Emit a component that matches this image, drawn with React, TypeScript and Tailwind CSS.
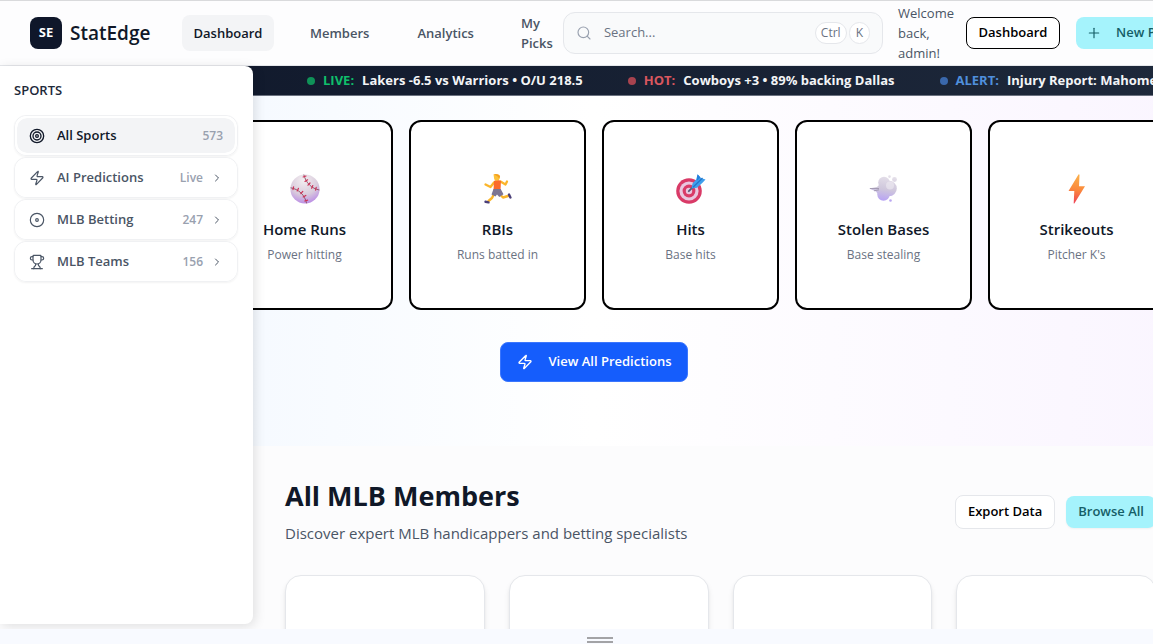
import React from 'react'
import { ChevronRight, Disc, Plus, Search, Target, Trophy, Zap, type LucideIcon } from 'lucide-react'

const tickerItems = [
  { label: 'LIVE:', text: 'Lakers -6.5 vs Warriors • O/U 218.5', dot: 'bg-[#0f9258]', color: 'text-[#0fbf6b]' },
  { label: 'HOT:', text: 'Cowboys +3 • 89% backing Dallas', dot: 'bg-[#a8434f]', color: 'text-[#d9575f]' },
  { label: 'ALERT:', text: 'Injury Report: Mahomes', dot: 'bg-[#3a68ac]', color: 'text-[#4f8fdc]' },
]

type SportItem = { name: string; count: string; icon: LucideIcon; active?: boolean }

const sports: SportItem[] = [
  { name: 'All Sports', count: '573', icon: Target, active: true },
  { name: 'AI Predictions', count: 'Live', icon: Zap },
  { name: 'MLB Betting', count: '247', icon: Disc },
  { name: 'MLB Teams', count: '156', icon: Trophy },
]

const BaseballArt = () => (
  <svg viewBox="0 0 32 32" className="w-8 h-8" aria-hidden="true">
    <defs>
      <radialGradient id="ball" cx="0.45" cy="0.2" r="0.9">
        <stop offset="0" stopColor="#f3eef1" />
        <stop offset="0.55" stopColor="#d9cbdc" />
        <stop offset="1" stopColor="#b27be8" />
      </radialGradient>
    </defs>
    <circle cx="16" cy="16" r="14.6" fill="url(#ball)" />
    <g fill="none" stroke="#8a4a5c" strokeWidth="0.9">
      <path d="M14.800 1.600C17 10 22.500 15.500 30.400 17" />
      <path d="M1.600 14.800C9.500 16 16 22 17.600 30.400" />
    </g>
    <g stroke="#cf2f56" strokeWidth="1.2" strokeLinecap="round">
      <path d="M14.200 4l2.800-1M16 8.400l2.600-1.600M19 12.200l2-2.200M22.600 15.200l1.200-2.600M26.600 17.200l.6-2.800" />
      <path d="M4 16.600l.6-2.800M8.200 18l1.200-2.600M11.800 20.600l2-2.200M14.200 24l2.600-1.600M15.800 28l2.800-.8" />
    </g>
  </svg>
)

const RunnerArt = () => (
  <svg viewBox="0 0 32 32" className="w-8 h-8" aria-hidden="true">
    <g fill="none" strokeLinecap="round" strokeLinejoin="round">
      <path d="M12 9.500L8.500 14L3.500 11.500" stroke="#fbb52a" strokeWidth="2.300" />
      <path d="M18.500 8.500L23.500 11.500L25 8.500" stroke="#fbb52a" strokeWidth="2.300" />
      <path d="M12.500 20L10 25L6.500 28" stroke="#fbb52a" strokeWidth="2.400" />
      <path d="M18 21.500L21 24.500L26 23" stroke="#fbb52a" strokeWidth="2.400" />
      <path d="M3.500 28.800L6.500 29.400" stroke="#4b3f78" strokeWidth="2.400" />
      <path d="M27 21.500L28.400 24.500" stroke="#4b3f78" strokeWidth="2.400" />
    </g>
    <path d="M12 8q3-2 7 0l-.5 9h-7z" fill="#fb6a2c" />
    <path d="M11.500 16h7.200l2.800 5.300-4.200 2.700-2.300-2.500-1.500 2-4-2z" fill="#7d7694" />
    <path d="M11.500 1.500h3.500q3 .3 2.800 3.500-.3 2.500-2.600 2.700-3.200.1-3.200-3z" fill="#fcc13a" />
    <path d="M11.500 1.300q6-1 6.600 2.300l-.8 2-2-2.300z" fill="#f5a01d" />
  </svg>
)

const DartboardArt = () => (
  <svg viewBox="0 0 32 32" className="w-8 h-8" aria-hidden="true">
    <circle cx="14" cy="18" r="12.800" fill="#d93a67" />
    <circle cx="14" cy="18" r="9.600" fill="#e9c6df" />
    <circle cx="14" cy="18" r="6.400" fill="#d93a67" />
    <circle cx="14" cy="18" r="3.200" fill="#e9c6df" />
    <path d="M13.800 18.200L20 12" stroke="#545b78" strokeWidth="1.800" strokeLinecap="round" />
    <path d="M16.500 15.500l1-5 4.500-5 .8-4 3 3.500 4.700 1.500-3 3.200-5.500 5z" fill="#3e9fec" />
    <path d="M18 14.200L27.500 5" stroke="#2474c9" strokeWidth="1.200" />
    <path d="M21.500 5.800l1-4.500 3 3.300-3.300 3z" fill="#2381dd" />
  </svg>
)

const DashArt = () => (
  <svg viewBox="0 0 32 32" className="w-8 h-8" aria-hidden="true">
    <defs>
      <linearGradient id="puff" gradientUnits="userSpaceOnUse" x1="19" y1="2" x2="15" y2="28">
        <stop offset="0" stopColor="#e6e1ea" />
        <stop offset="0.55" stopColor="#cfc7dc" />
        <stop offset="1" stopColor="#b7a2f5" />
      </linearGradient>
    </defs>
    <g fill="url(#puff)">
      <path d="M1 15.500L9 14l4-4 4 12-6 .5-3-4z" />
      <circle cx="16" cy="9.500" r="5.800" />
      <circle cx="15.500" cy="21.500" r="6.200" />
      <circle cx="21" cy="15.500" r="7.800" />
      <circle cx="26.500" cy="6.500" r="2.400" />
      <circle cx="21.500" cy="3.600" r="1.300" />
      <circle cx="22.500" cy="27.500" r="1.300" />
    </g>
    <path d="M2 15.500h9M6 17.800l5-1" stroke="#9f96ae" strokeWidth="0.9" />
    <circle cx="22" cy="12.500" r="4" fill="#eeebf1" opacity="0.6" />
  </svg>
)

const BoltArt = () => (
  <svg viewBox="0 0 32 32" className="w-8 h-8" aria-hidden="true">
    <defs>
      <linearGradient id="bolt" x1="0.5" y1="0" x2="0.4" y2="1">
        <stop offset="0" stopColor="#fbb04a" />
        <stop offset="0.5" stopColor="#fb8a3c" />
        <stop offset="1" stopColor="#ee4257" />
      </linearGradient>
    </defs>
    <path d="M17.500 1.500L7.500 18h5.800l-.6 12.300q.4.600.8 0L24 13.300h-6l.5-11.500q-.4-.8-1-.3z" fill="url(#bolt)" />
  </svg>
)

const categories = [
  { title: 'Home Runs', note: 'Power hitting', art: BaseballArt },
  { title: 'RBIs', note: 'Runs batted in', art: RunnerArt },
  { title: 'Hits', note: 'Base hits', art: DartboardArt },
  { title: 'Stolen Bases', note: 'Base stealing', art: DashArt },
  { title: 'Strikeouts', note: "Pitcher K's", art: BoltArt },
]

const Header: React.FC = () => (
  <header className="flex items-center h-[66px] pl-[30px] border-t border-t-[#d9dadc] border-b border-b-gray-200 bg-[#fdfdfe]">
    <a href="#" className="flex items-center gap-2 w-[152px] shrink-0">
      <span className="flex justify-center items-center bg-[#0f172a] rounded-lg w-8 h-8 font-bold text-[13px] text-white">
        SE
      </span>
      <span className="font-semibold text-[19px] text-gray-900">StatEdge</span>
    </a>

    <nav className="flex items-center shrink-0 font-semibold text-[13px] text-gray-600 leading-5">
      <a href="#" className="flex justify-center items-center bg-gray-100 rounded-lg w-[92px] h-9 text-gray-900">
        Dashboard
      </a>
      <a href="#" className="ml-9">Members</a>
      <a href="#" className="ml-12">Analytics</a>
      <a href="#" className="ml-[47px] w-[42px]">My Picks</a>
    </nav>

    <div className="flex flex-1 items-center bg-gray-50 px-3 border border-gray-200 rounded-xl min-w-0 h-[42px]">
      <Search className="w-4 h-4 text-gray-400 shrink-0" strokeWidth={1.75} />
      <input
        type="search"
        aria-label="Search"
        placeholder="Search..."
        className="flex-1 ml-3 outline-none min-w-0 text-[13px] placeholder:text-gray-500"
      />
      <kbd className="bg-white px-[5px] border border-gray-200 rounded-full font-['Open_Sans',sans-serif] text-[12px] text-gray-500 leading-5">
        Ctrl
      </kbd>
      <kbd className="bg-white ml-[2px] px-[6px] border border-gray-200 rounded-full font-['Open_Sans',sans-serif] text-[12px] text-gray-500 leading-5">
        K
      </kbd>
    </div>

    <p className="ml-[15px] w-[68px] text-[13px] text-gray-600 leading-5 shrink-0">Welcome back, admin!</p>
    <button className="bg-white border border-black rounded-lg w-[94px] h-8 font-semibold text-[13px] text-black shrink-0">
      Dashboard
    </button>
    <button className="flex items-center gap-[14px] bg-[#a5f3fc] ml-4 px-[10px] rounded-lg w-28 h-8 font-semibold text-[#155e67] text-[13px] whitespace-nowrap shrink-0">
      <Plus className="w-4 h-4 shrink-0" strokeWidth={1.75} />
      New Pick
    </button>
  </header>
)

const Ticker: React.FC = () => (
  <div className="flex items-center gap-[45px] bg-linear-to-r from-[#0f172a] to-[#1e293b] pl-[307px] border-[#6b7280] border-b h-[30px] overflow-hidden font-bold text-[13px] whitespace-nowrap">
    {tickerItems.map((item) => (
      <div key={item.label} className="flex items-center gap-2 shrink-0">
        <span className={`rounded-full w-2 h-2 ${item.dot}`}></span>
        <span className={item.color}>{item.label}</span>
        <span className="text-gray-100">{item.text}</span>
      </div>
    ))}
  </div>
)

const Sidebar: React.FC = () => (
  <aside className="top-[66px] bottom-[5px] left-0 z-10 absolute bg-white shadow-[2px_2px_12px_rgba(0,0,0,0.12)] px-[14px] pt-[14px] rounded-r-lg w-[253px]">
    <h2 className="font-semibold text-[13px] text-gray-800 leading-5">SPORTS</h2>
    <ul className="flex flex-col gap-px mt-[15px]">
      {sports.map(({ name, count, icon: Icon, active }) => (
        <li key={name} className="shadow-xs border border-[#f0f1f3] rounded-xl w-56">
          <button
            className={`flex items-center bg-clip-padding px-3 border-2 border-white rounded-xl w-full h-[39px] text-left ${
              active ? 'bg-gray-100 text-gray-900' : 'bg-white text-gray-600'
            }`}
          >
            <Icon className="w-4 h-4 shrink-0" strokeWidth={active ? 2 : 1.75} />
            <span className="flex-1 ml-3 font-semibold text-[13px]">{name}</span>
            <span className="font-semibold text-[12px] text-gray-400">{count}</span>
            {!active && <ChevronRight className="ml-2 w-3 h-3" strokeWidth={2} />}
          </button>
        </li>
      ))}
    </ul>
  </aside>
)

const Hero: React.FC = () => (
  <section className="bg-linear-to-r from-[#eff6ff] via-white to-[#faf5ff] px-[23px] pt-6 pb-16">
    {/* first column stays behind the sports drawer */}
    <div className="gap-4 grid grid-cols-6">
      {categories.map(({ title, note, art: Art }) => (
        <article
          key={title}
          className="flex flex-col justify-center items-center bg-white pt-2 border-2 border-black rounded-xl h-[190px] first:col-start-2"
        >
          <Art />
          <h3 className="mt-3 font-semibold text-[15px] text-gray-900 leading-6">{title}</h3>
          <p className="mt-1 text-[12px] text-gray-500 leading-5">{note}</p>
        </article>
      ))}
    </div>
    <div className="flex justify-center mt-8">
      <button className="flex items-center gap-4 bg-[#155dfc] px-4 border border-[#3b76fd] rounded-lg h-10 font-semibold text-[13px] text-white">
        <Zap className="w-4 h-4" strokeWidth={2} />
        View All Predictions
      </button>
    </div>
  </section>
)

const Members: React.FC = () => (
  <section className="ml-[253px] px-8 pt-8">
    <div className="flex justify-between items-center">
      <div>
        <h1 className="font-bold text-[27px] text-gray-900 leading-9">All MLB Members</h1>
        <p className="mt-[7px] text-[15px] text-gray-600 leading-6">Discover expert MLB handicappers and betting specialists</p>
      </div>
      <div className="flex items-center gap-[11px] font-semibold text-[13px]">
        <button className="bg-white px-3 border border-gray-200 rounded-lg h-[34px] text-black">Export Data</button>
        <button className="bg-[#a5f3fc] shadow-xs px-3 rounded-lg h-8 text-[#155e67]">Browse All</button>
      </div>
    </div>
    <div className="gap-6 grid grid-cols-4 mt-[30px]">
      {[1, 2, 3, 4].map((n) => (
        <article key={n} className="bg-white shadow-md border border-gray-200 rounded-2xl h-64"></article>
      ))}
    </div>
  </section>
)

export default function App() {
  return (
    <div className="flex flex-col bg-[#f8faff] h-screen overflow-hidden font-['Open_Sans','Noto_Sans',sans-serif]">
      <div className="relative flex-1 bg-[#fcfcfd] min-h-0 overflow-hidden">
        <Sidebar />
        <div className="bg-[#fcfcfd] w-[calc(100%+35px)]">
          <Header />
          <Ticker />
          <main>
            <Hero />
            <Members />
          </main>
        </div>
      </div>
      {/* Drag handle */}
      <div className="flex flex-col items-center gap-[2px] bg-[#f8faff] pt-2 pl-[47px] h-[15px] shrink-0">
        <span className="bg-[#a3a3a6] w-[26px] h-[2px]"></span>
        <span className="bg-[#a3a3a6] w-[26px] h-[2px]"></span>
      </div>
    </div>
  )
}
